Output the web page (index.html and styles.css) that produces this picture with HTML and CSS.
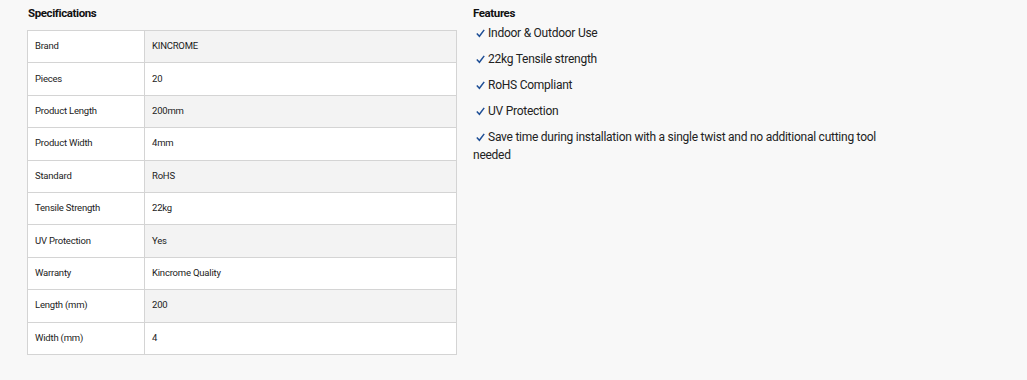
FILE: index.html
```html
<!DOCTYPE html>
<html lang="en">
<head>
<meta charset="utf-8">
<title>Specifications</title>
<link rel="stylesheet" href="styles.css">
</head>
<body>
<div class="page">
  <section class="specs">
    <h2 class="title">Specifications</h2>
    <table class="spec-table">
      <tbody>
        <tr><td class="k">Brand</td><td class="v">KINCROME</td></tr>
        <tr><td class="k">Pieces</td><td class="v">20</td></tr>
        <tr><td class="k">Product Length</td><td class="v">200mm</td></tr>
        <tr><td class="k">Product Width</td><td class="v">4mm</td></tr>
        <tr><td class="k">Standard</td><td class="v">RoHS</td></tr>
        <tr><td class="k">Tensile Strength</td><td class="v">22kg</td></tr>
        <tr><td class="k">UV Protection</td><td class="v">Yes</td></tr>
        <tr><td class="k">Warranty</td><td class="v">Kincrome Quality</td></tr>
        <tr><td class="k">Length (mm)</td><td class="v">200</td></tr>
        <tr><td class="k">Width (mm)</td><td class="v">4</td></tr>
      </tbody>
    </table>
  </section>
  <section class="features">
    <h2 class="ftitle">Features</h2>
    <ul class="flist">
      <li><svg class="tick" width="9" height="9" viewBox="0 0 9 9"><path d="M0.8 4.6 L3.4 7.3 L8.2 0.9" fill="none" stroke="#1f4f96" stroke-width="1.5"/></svg>Indoor &amp; Outdoor Use</li>
      <li><svg class="tick" width="9" height="9" viewBox="0 0 9 9"><path d="M0.8 4.6 L3.4 7.3 L8.2 0.9" fill="none" stroke="#1f4f96" stroke-width="1.5"/></svg>22kg Tensile strength</li>
      <li><svg class="tick" width="9" height="9" viewBox="0 0 9 9"><path d="M0.8 4.6 L3.4 7.3 L8.2 0.9" fill="none" stroke="#1f4f96" stroke-width="1.5"/></svg>RoHS Compliant</li>
      <li><svg class="tick" width="9" height="9" viewBox="0 0 9 9"><path d="M0.8 4.6 L3.4 7.3 L8.2 0.9" fill="none" stroke="#1f4f96" stroke-width="1.5"/></svg>UV Protection</li>
      <li><svg class="tick" width="9" height="9" viewBox="0 0 9 9"><path d="M0.8 4.6 L3.4 7.3 L8.2 0.9" fill="none" stroke="#1f4f96" stroke-width="1.5"/></svg>Save time during installation with a single twist and no additional cutting tool needed</li>
    </ul>
  </section>
</div>
</body>
</html>
```
FILE: styles.css
```css
html, body { margin: 0; padding: 0; }
body {
  background: #f8f8f8;
  font-family: Roboto, "Liberation Sans", sans-serif;
  color: #222;
}
.page {
  display: flex;
  gap: 16px;
  padding: 6px 0 0 27px;
}
.specs { width: 430px; }
.title {
  margin: 0 0 9px 1px;
  font-size: 11.5px;
  font-weight: bold;
  letter-spacing: -0.4px;
  line-height: 15px;
  color: #111;
}
.spec-table {
  width: 430px;
  border-collapse: collapse;
  border: 1px solid #d4d4d4;
  font-size: 9.5px;
  letter-spacing: -0.2px;
  color: #222;
}
.spec-table td {
  border: 1px solid #d4d4d4;
  height: 29.4px;
  padding: 0 7px 2px;
  vertical-align: middle;
}
.spec-table .k { width: 102px; background: #fff; }
.spec-table .v { background: #fff; }
.spec-table tr:nth-child(odd) .v { background: #f3f3f3; }
.features { width: 412px; }
.ftitle {
  margin: 0 0 3px 0;
  font-size: 11.5px;
  font-weight: bold;
  letter-spacing: -0.4px;
  line-height: 15px;
  color: #111;
}
.flist {
  list-style: none;
  margin: 0;
  padding: 0;
  font-size: 12px;
  letter-spacing: -0.25px;
  line-height: 18px;
  color: #222;
}
.flist li { margin-bottom: 8px; }
.tick {
  display: inline-block;
  vertical-align: -1px;
  margin: 0 3px 0 3px;
}
```
